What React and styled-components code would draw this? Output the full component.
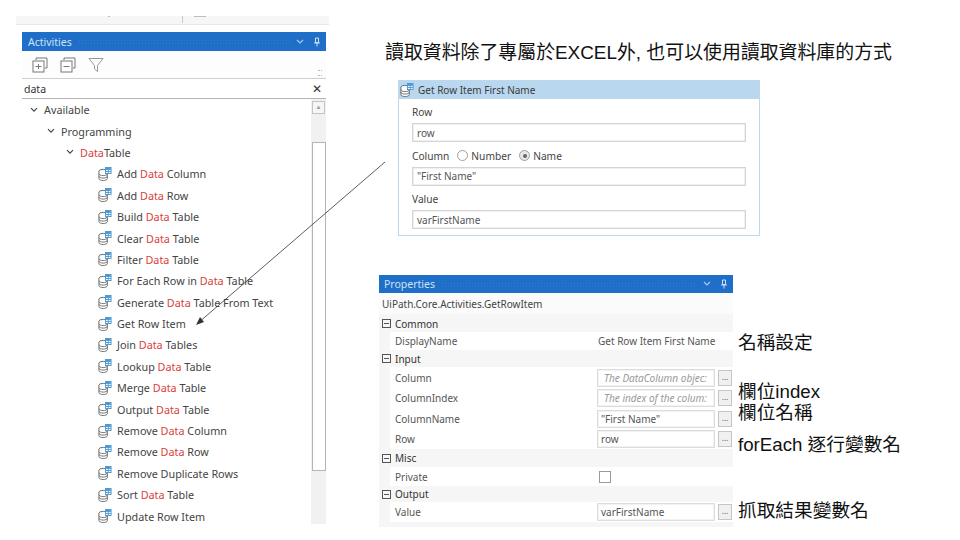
import React from "react";
import styled, { createGlobalStyle } from "styled-components";

const Global = createGlobalStyle`
  html, body { margin: 0; padding: 0; background: #fff; }
  body { width: 960px; height: 540px; overflow: hidden; font-family: "Noto Sans", "Open Sans", sans-serif; }
`;
const UI = `"Noto Sans", "Open Sans", sans-serif`;
const SLIDE = `"Liberation Sans", "Noto Sans CJK TC", sans-serif`;

const Slide = styled.div`
  position: relative; width: 960px; height: 540px; display: flex; overflow: hidden; background: #fff;
`;
const LeftColumn = styled.div`
  width: 313px; margin-left: 16px; padding-top: 16px; height: 508px; display: flex; flex-direction: column; background: #fff; flex: none;
`;
const TopStrip = styled.div`
  height: 8px; background: #f6f6f6; border-bottom: 1px solid #e8e8e8; position: relative; flex: none;
`;
const Tick = styled.div`
  position: absolute; left: 166px; top: 0; width: 1px; height: 7px; background: #c8c8c8;
`;
const StripMark = styled.div`
  position: absolute; left: ${p => p.$l}px; top: 0; width: ${p => p.$w}px; height: 1px; background: #bdbdbd;
`;
const Panel = styled.div`
  margin: 7px 3px 0 6px; flex: 1; min-height: 0; display: flex; flex-direction: column;
`;
const TitleBar = styled.div`
  height: ${p => p.$h || 19}px; background: #1f6fc8; color: #cfe1f6; display: flex; align-items: center; gap: 6px;
  padding: 0 5px 0 ${p => p.$pl || 6}px; font: 10.5px ${UI}; flex: none;
`;
const Dots = styled.div`
  flex: 1; height: 5px; background-image: radial-gradient(#2f7ccf 0.6px, transparent 0.8px); background-size: 3px 3px;
`;
const Toolbar = styled.div`
  height: 27px; display: flex; align-items: center; gap: 11px; padding-left: 10px; background: #fdfdfd; border-bottom: 1px solid #cfcfcf; position: relative; flex: none;
`;
const Grip = styled.div`
  position: absolute; right: 4px; top: 19px; width: 4px; height: 4px; border-top: 1px dotted #bbb; border-bottom: 1px dotted #bbb;
`;
const Search = styled.div`
  height: 19px; display: flex; align-items: center; justify-content: space-between; padding: 0 4px 0 2px; font: 10.5px ${UI}; color: #333; border-bottom: 1px solid #b5b5b5; flex: none;
`;
const Close = styled.span` font-size: 12px; line-height: 1; `;
const TreeArea = styled.div`
  flex: 1; min-height: 0; display: flex; overflow: hidden;
`;
const Tree = styled.div`
  flex: 1; display: flex; flex-direction: column;
`;
const TreeRow = styled.div`
  height: 21.4px; flex: none; display: flex; align-items: center; gap: ${p => p.$gap || 5}px; padding-left: ${p => p.$indent}px; font: 10.8px ${UI}; color: #444; white-space: nowrap;
`;
const Red = styled.span` color: #d9413c; `;
const Scrollbar = styled.div`
  width: 15px; background: #f1f1f1; position: relative; flex: none;
`;
const ScrollBtn = styled.div`
  position: absolute; left: 1px; top: 2px; width: 11px; height: 11px; background: #f6f6f6; border: 1px solid #c4c4c4; color: #999; font-size: 6px; line-height: 10px; text-align: center;
`;
const Thumb = styled.div`
  position: absolute; left: 1px; top: 43px; width: 12px; height: 327px; background: #fff; border: 1px solid #b4b4b4;
`;
const RightColumn = styled.div`
  flex: 1; display: flex; flex-direction: column; padding: 44px 0 0 56px; min-width: 0;
`;
const Heading = styled.div`
  font: 18.9px/18px ${SLIDE}; color: #111; white-space: nowrap;
`;
const Card = styled.div`
  margin: 18px 0 0 13px; width: 360px; height: 154px; border: 1px solid #bcd8ec; background: #fff; flex: none;
`;
const CardHeader = styled.div`
  height: 18px; background: #b9d7ee; display: flex; align-items: center; gap: 4px; padding-left: 1px; font: 10px ${UI}; color: #3b3b3b;
`;
const CardBody = styled.div`
  padding: 4px 13px 0 13px; display: flex; flex-direction: column;
`;
const FieldLabel = styled.div`
  height: 18px; margin-bottom: 2px; display: flex; align-items: center; gap: 6px; font: 10.2px ${UI}; color: #444;
`;
const Radio = styled.span`
  width: 9px; height: 9px; border-radius: 50%; border: 1px solid #a0a0a0; margin-left: ${p => p.$ml || 0}px; margin-right: -3px; display: inline-flex; align-items: center; justify-content: center; background: ${p => p.$on ? "#e8e8e8" : "#fff"};
  &::after { content: ""; width: 4px; height: 4px; border-radius: 50%; background: ${p => p.$on ? "#666" : "transparent"}; }
`;
const TextInput = styled.div`
  height: 17px; margin-bottom: 4.5px; border: 1px solid #d5d5d5; padding-left: 4px; display: flex; align-items: center; font: 10px ${UI}; color: #555;
  box-shadow: inset 0 0 0 1px #f0f0f0;
`;
const PropsWrap = styled.div`
  margin: 39px 0 0 -6px; display: flex; align-items: flex-start; flex: none;
`;
const Props = styled.div`
  width: 354px; background: #f6f6f6; flex: none; height: 252px; display: flex; flex-direction: column;
`;
const TypeName = styled.div`
  height: 21px; display: flex; align-items: center; padding-left: 3px; font: 10px ${UI}; color: #444; background: #fbfbfb;
  margin-bottom: 1px;
`;
const GroupRow = styled.div`
  height: ${p => p.$h}px; display: flex; align-items: center; gap: 4px; padding-left: 3px; font: 10px ${UI}; color: #333;
`;
const Minus = styled.span`
  width: 7px; height: 7px; border: 1px solid #555; position: relative; display: inline-block; flex: none;
  &::after { content: ""; position: absolute; left: 1px; right: 1px; top: 3px; height: 1px; background: #555; }
`;
const PropRow = styled.div`
  height: ${p => p.$h}px; margin-left: 11px; display: grid; grid-template-columns: 207px 120px 16px; align-items: center; background: #fff; font: 10px ${UI}; color: #555;
`;
const PropName = styled.div` padding-left: 5px; `;
const ValueBox = styled.div`
  height: 18px; width: 118px; border: 1px solid #dcdcdc; box-shadow: inset 0 0 0 1px #f2f2f2; box-sizing: border-box; padding-left: ${p => p.$hint ? 6 : 3}px; display: flex; align-items: center; white-space: nowrap; overflow: hidden; background: #fff;
  ${p => p.$hint ? "font-style: italic; color: #999;" : ""}
`;
const PlainValue = styled.div` white-space: nowrap; margin-left: 1px; `;
const More = styled.div`
  width: 14px; height: 16px; margin-left: 1px; box-sizing: border-box; background: #f0f0f0; border: 1px solid #c6c6c6; font-size: 8px; line-height: 11px; text-align: center; color: #555;
`;
const Check = styled.div`
  width: 10px; height: 10px; border: 1px solid #9a9a9a; background: #fff; margin-left: 2px;
`;
const Notes = styled.div`
  margin-left: 5px; display: flex; flex-direction: column; white-space: nowrap; color: #111; font-family: ${SLIDE}; font-size: 18.7px;
`;
const Note = styled.div`
  margin-top: ${p => p.$mt}px; line-height: 20px; height: 20px;
`;
const ArrowLayer = styled.svg`
  position: absolute; left: 0; top: 0; pointer-events: none;
`;

const DbIcon = ({ size = 14 }) => (
  <svg width={size} height={size} viewBox="0 0 15 15" fill="none" style={{ flex: "none" }}>
    <ellipse cx="5.5" cy="4.5" rx="4.5" ry="2" fill="#fff" stroke="#6c6c6c" />
    <path d="M1 4.500v8c0 1.100 2 2 4.500 2s4.500-.9 4.500-2v-8" fill="#fff" stroke="#6c6c6c" />
    <path d="M1 7.200c0 1.100 2 2 4.500 2s4.500-.9 4.500-2M1 9.900c0 1.100 2 2 4.500 2s4.500-.9 4.500-2" stroke="#6c6c6c" />
    <rect x="8" y="0.500" width="6" height="6.500" fill="#fff" stroke="#4a97d3" />
    <path d="M8 2.600h6M8 4.800h6M11 .5v6.500" stroke="#4a97d3" />
    <rect x="8.500" y="1" width="5" height="1.400" fill="#4a97d3" />
  </svg>
);
const Chevron = () => (
  <svg width="8" height="6" viewBox="0 0 8 6" fill="none" style={{ flex: "none" }}>
    <path d="M1 1.200 4 4.200 7 1.200" stroke="#444" strokeWidth="1.200" />
  </svg>
);
const PanelControls = () => (
  <>
    <svg width="8" height="6" viewBox="0 0 8 6" fill="none"><path d="M1 1 4 4 7 1" stroke="#a9c9ec" strokeWidth="1.200" /></svg>
    <svg width="8" height="10" viewBox="0 0 8 10" fill="none" style={{ marginLeft: 3 }}>
      <path d="M2.500 1h3v4.500h-3zM1 6h6M4 6v3.500" stroke="#cfe0f5" />
    </svg>
  </>
);
const ExpandIcon = ({ minus }) => (
  <svg width="17" height="16" viewBox="0 0 17 16" fill="none">
    <path d="M4 3V1h11v10h-2" stroke="#777" />
    <rect x="1" y="4" width="11" height="11" fill="#fff" stroke="#777" />
    <path d="M3.500 9.500h6" stroke="#777" />
    {!minus && <path d="M6.500 7v5" stroke="#777" />}
  </svg>
);
const FilterIcon = () => (
  <svg width="16" height="16" viewBox="0 0 16 16" fill="none">
    <path d="M1 1.500h14L9.500 8.500v6l-3-2.500V8.500z" stroke="#999" fill="#fff" />
  </svg>
);

const D = () => <Red>Data</Red>;
const items = [
  <>Add <D /> Column</>, <>Add <D /> Row</>, <>Build <D /> Table</>, <>Clear <D /> Table</>,
  <>Filter <D /> Table</>, <>For Each Row in <D /> Table</>, <>Generate <D /> Table From Text</>,
  <>Get Row Item</>, <>Join <D /> Tables</>, <>Lookup <D /> Table</>, <>Merge <D /> Table</>,
  <>Output <D /> Table</>, <>Remove <D /> Column</>, <>Remove <D /> Row</>, <>Remove Duplicate Rows</>,
  <>Sort <D /> Table</>, <>Update Row Item</>,
];

const Prop = ({ h, name, value, hint, box, check }) => (
  <PropRow $h={h}>
    <PropName>{name}</PropName>
    {check ? <Check /> : box ? <ValueBox $hint={hint}>{value}</ValueBox> : <PlainValue>{value}</PlainValue>}
    {box ? <More>...</More> : <span />}
  </PropRow>
);
const Group = ({ h, children }) => <GroupRow $h={h}><Minus />{children}</GroupRow>;

export default function App() {
  return (
    <Slide>
      <Global />
      <LeftColumn>
        <TopStrip><StripMark $l={92} $w={2} /><Tick /><StripMark $l={178} $w={12} /></TopStrip>
        <Panel>
          <TitleBar>Activities<Dots /><PanelControls /></TitleBar>
          <Toolbar>
            <ExpandIcon /><ExpandIcon minus /><FilterIcon /><Grip />
          </Toolbar>
          <Search>data<Close>✕</Close></Search>
          <TreeArea>
            <Tree>
              <TreeRow $indent={8} $gap={6}><Chevron />Available</TreeRow>
              <TreeRow $indent={25} $gap={6}><Chevron />Programming</TreeRow>
              <TreeRow $indent={44} $gap={6}><Chevron /><span><Red>Data</Red>Table</span></TreeRow>
              {items.map((it, i) => (
                <TreeRow key={i} $indent={76}><DbIcon /><span>{it}</span></TreeRow>
              ))}
            </Tree>
            <Scrollbar>
              <ScrollBtn>▲</ScrollBtn>
              <Thumb />
            </Scrollbar>
          </TreeArea>
        </Panel>
      </LeftColumn>

      <RightColumn>
        <Heading>讀取資料除了專屬於EXCEL外, 也可以使用讀取資料庫的方式</Heading>
        <Card>
          <CardHeader><DbIcon />Get Row Item First Name</CardHeader>
          <CardBody>
            <FieldLabel>Row</FieldLabel>
            <TextInput>row</TextInput>
            <FieldLabel>Column<Radio $ml={2} />Number<Radio $ml={2} $on />Name</FieldLabel>
            <TextInput>"First Name"</TextInput>
            <FieldLabel>Value</FieldLabel>
            <TextInput>varFirstName</TextInput>
          </CardBody>
        </Card>
        <PropsWrap>
          <Props>
            <TitleBar $h={18} $pl={5}>Properties<Dots /><PanelControls /></TitleBar>
            <TypeName>UiPath.Core.Activities.GetRowItem</TypeName>
            <Group h={17}>Common</Group>
            <Prop h={18} name="DisplayName" value="Get Row Item First Name" />
            <Group h={17}>Input</Group>
            <Prop h={21} name="Column" value="The DataColumn objec:" hint box />
            <Prop h={20} name="ColumnIndex" value="The index of the colum:" hint box />
            <Prop h={21} name="ColumnName" value={'"First Name"'} box />
            <Prop h={20} name="Row" value="row" box />
            <Group h={18}>Misc</Group>
            <Prop h={19} name="Private" check />
            <Group h={16}>Output</Group>
            <Prop h={20} name="Value" value="varFirstName" box />
          </Props>
          <Notes>
            <Note $mt={58}>名稱設定</Note>
            <Note $mt={29}>欄位index</Note>
            <Note $mt={1}>欄位名稱</Note>
            <Note $mt={12}>forEach 逐行變數名</Note>
            <Note $mt={46}>抓取結果變數名</Note>
          </Notes>
        </PropsWrap>
      </RightColumn>

      <ArrowLayer width="960" height="540" viewBox="0 0 960 540">
        <path d="M385 162 198 323" stroke="#333" strokeWidth="0.8" fill="none" />
        <path d="M196 325 200 317 204 322z" fill="#333" />
      </ArrowLayer>
    </Slide>
  );
}
